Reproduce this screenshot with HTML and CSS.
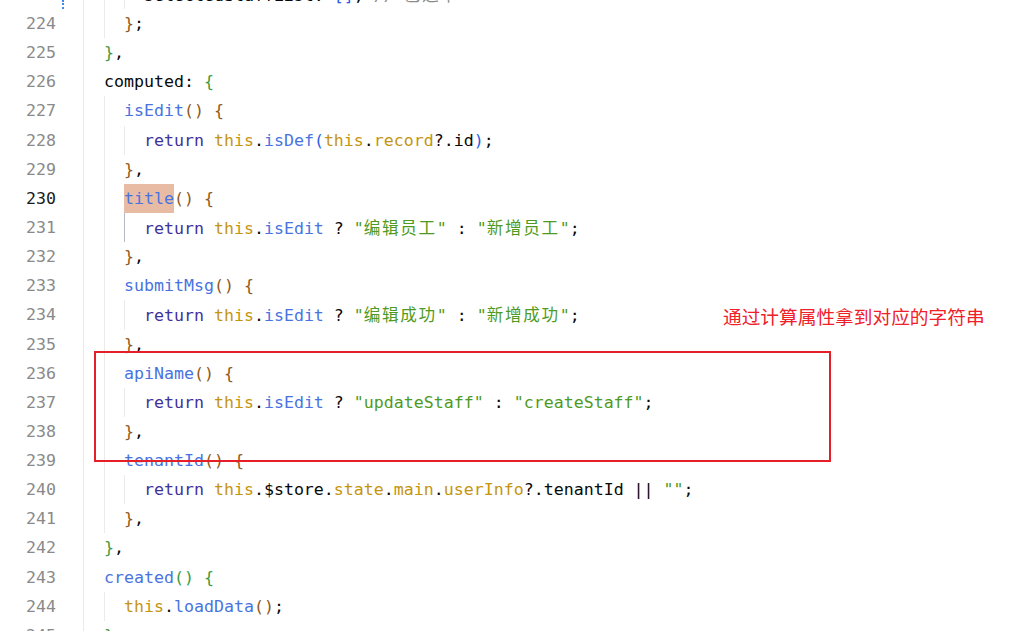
FILE: index.html
```html
<!DOCTYPE html>
<html lang="zh-CN">
<head>
<meta charset="utf-8">
<title>computed</title>
<link rel="stylesheet" href="styles.css">
</head>
<body>
<div class="page">
  <div class="editor">
    <div class="row"><div class="ln"><span class="vcs"></span>223</div><div class="code"><span class="ind"></span><span class="ind g"></span><span class="ind g"></span><span class="tx">selectedStaffList: <span class="b3">[]</span>, <span class="c">// <span class="cj">已选中</span></span></span></div></div>
    <div class="row"><div class="ln">224</div><div class="code"><span class="ind"></span><span class="ind g"></span><span class="tx"><span class="b2">}</span>;</span></div></div>
    <div class="row"><div class="ln">225</div><div class="code"><span class="ind"></span><span class="tx"><span class="b1">}</span>,</span></div></div>
    <div class="row"><div class="ln">226</div><div class="code"><span class="ind"></span><span class="tx">computed: <span class="b1">{</span></span></div></div>
    <div class="row"><div class="ln">227</div><div class="code"><span class="ind"></span><span class="ind g"></span><span class="tx"><span class="f">isEdit</span><span class="b2">()</span> <span class="b2">{</span></span></div></div>
    <div class="row"><div class="ln">228</div><div class="code"><span class="ind"></span><span class="ind g"></span><span class="ind g"></span><span class="tx"><span class="k">return</span> <span class="t">this</span>.<span class="f">isDef</span><span class="b3">(</span><span class="t">this</span>.<span class="t">record</span>?.id<span class="b3">)</span>;</span></div></div>
    <div class="row"><div class="ln">229</div><div class="code"><span class="ind"></span><span class="ind g"></span><span class="tx"><span class="b2">}</span>,</span></div></div>
    <div class="row"><div class="ln cur">230</div><div class="code"><span class="ind"></span><span class="ind g"></span><span class="tx"><span class="f hl">title</span><span class="b2">()</span> <span class="b2">{</span></span></div></div>
    <div class="row"><div class="ln">231</div><div class="code"><span class="ind"></span><span class="ind g"></span><span class="ind g act"></span><span class="tx"><span class="k">return</span> <span class="t">this</span>.<span class="f">isEdit</span> ? <span class="s">"<span class="cj">编辑员工</span>"</span> : <span class="s">"<span class="cj">新增员工</span>"</span>;</span></div></div>
    <div class="row"><div class="ln">232</div><div class="code"><span class="ind"></span><span class="ind g"></span><span class="tx"><span class="b2">}</span>,</span></div></div>
    <div class="row"><div class="ln">233</div><div class="code"><span class="ind"></span><span class="ind g"></span><span class="tx"><span class="f">submitMsg</span><span class="b2">()</span> <span class="b2">{</span></span></div></div>
    <div class="row"><div class="ln">234</div><div class="code"><span class="ind"></span><span class="ind g"></span><span class="ind g"></span><span class="tx"><span class="k">return</span> <span class="t">this</span>.<span class="f">isEdit</span> ? <span class="s">"<span class="cj">编辑成功</span>"</span> : <span class="s">"<span class="cj">新增成功</span>"</span>;</span></div></div>
    <div class="row"><div class="ln">235</div><div class="code"><span class="ind"></span><span class="ind g"></span><span class="tx"><span class="b2">}</span>,</span></div></div>
    <div class="row"><div class="ln">236</div><div class="code"><span class="ind"></span><span class="ind g"></span><span class="tx"><span class="f">apiName</span><span class="b2">()</span> <span class="b2">{</span></span></div></div>
    <div class="row"><div class="ln">237</div><div class="code"><span class="ind"></span><span class="ind g"></span><span class="ind g"></span><span class="tx"><span class="k">return</span> <span class="t">this</span>.<span class="f">isEdit</span> ? <span class="s">"updateStaff"</span> : <span class="s">"createStaff"</span>;</span></div></div>
    <div class="row"><div class="ln">238</div><div class="code"><span class="ind"></span><span class="ind g"></span><span class="tx"><span class="b2">}</span>,</span></div></div>
    <div class="row"><div class="ln">239</div><div class="code"><span class="ind"></span><span class="ind g"></span><span class="tx"><span class="f">tenantId</span><span class="b2">()</span> <span class="b2">{</span></span></div></div>
    <div class="row"><div class="ln">240</div><div class="code"><span class="ind"></span><span class="ind g"></span><span class="ind g"></span><span class="tx"><span class="k">return</span> <span class="t">this</span>.$store.<span class="t">state</span>.<span class="t">main</span>.<span class="t">userInfo</span>?.tenantId || <span class="s">""</span>;</span></div></div>
    <div class="row"><div class="ln">241</div><div class="code"><span class="ind"></span><span class="ind g"></span><span class="tx"><span class="b2">}</span>,</span></div></div>
    <div class="row"><div class="ln">242</div><div class="code"><span class="ind"></span><span class="tx"><span class="b1">}</span>,</span></div></div>
    <div class="row"><div class="ln">243</div><div class="code"><span class="ind"></span><span class="tx"><span class="f">created</span><span class="b1">()</span> <span class="b1">{</span></span></div></div>
    <div class="row"><div class="ln">244</div><div class="code"><span class="ind"></span><span class="ind g"></span><span class="tx"><span class="t">this</span>.<span class="f">loadData</span><span class="b2">()</span>;</span></div></div>
    <div class="row"><div class="ln">245</div><div class="code"><span class="ind"></span><span class="tx"><span class="b1">}</span>,</span></div></div>
  </div>
  <div class="mark-box"></div>
  <div class="note">通过计算属性拿到对应的字符串</div>
</div>
</body>
</html>
```

FILE: styles.css
```css
* { box-sizing: border-box; }
html, body { margin: 0; padding: 0; background: #ffffff; }
body { overflow: hidden; }

.page {
  position: relative;
  width: 1032px;
  height: 631px;
  overflow: hidden;
  background: #ffffff;
}

.editor {
  display: flex;
  flex-direction: column;
  margin-top: -20.2px;
  font-family: "DejaVu Sans Mono", "Liberation Mono", "Noto Sans CJK SC", monospace;
  font-size: 16.6px;
  color: #080808;
}

.row {
  display: flex;
  height: 29.15px;
  line-height: 29.15px;
}

.ln {
  position: relative;
  width: 84px;
  flex: 0 0 84px;
  padding-right: 27px;
  text-align: right;
  color: #8a8a8a;
  border-right: 1px solid #ebebeb;
}
.ln.cur { color: #1a1a1a; }

.vcs {
  position: absolute;
  left: 62px;
  bottom: 0;
  width: 3px;
  height: 9px;
  border-left: 2px dotted #3d8bf0;
}

.code {
  display: flex;
  align-items: stretch;
  white-space: pre;
}

.ind {
  flex: 0 0 20px;
  width: 20px;
}
.ind.g { border-left: 1px solid #ebebeb; }
.ind.act { border-left-color: #b4b9c6; }

.tx { white-space: pre; }

.k  { color: #41329a; }
.t  { color: #c5950f; }
.f  { color: #4a73e0; }
.s  { color: #4f9a22; }
.c  { color: #8c8c8c; }
.b1 { color: #3f9a3c; }
.b2 { color: #90591a; }
.b3 { color: #2d5ee6; }

.cj {
  font-family: "Noto Sans CJK SC", sans-serif;
  letter-spacing: 1.65px;
}

.hl {
  display: inline-block;
  height: 29.15px;
  line-height: 29.15px;
  background: #e8bca4;
}

.mark-box {
  position: absolute;
  left: 94px;
  top: 351px;
  width: 737px;
  height: 111px;
  border: 2px solid #e61e28;
}

.note {
  position: absolute;
  left: 723px;
  top: 305px;
  font-family: "Noto Sans CJK SC", sans-serif;
  font-size: 18.7px;
  line-height: 22px;
  color: #f0202a;
  white-space: nowrap;
}
```
